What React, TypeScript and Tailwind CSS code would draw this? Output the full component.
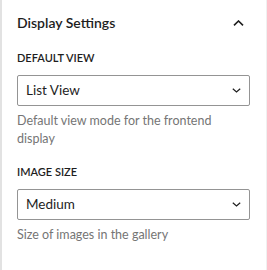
import React from "react";

function ChevronUp() {
  return (
    <svg width="11" height="6" viewBox="0 0 11 6" fill="none">
      <path d="M1 5.3L5.5 1L10 5.3" stroke="#1e1e1e" strokeWidth="1.6" />
    </svg>
  );
}

function ChevronDown() {
  return (
    <svg width="9" height="5" viewBox="0 0 9 5" fill="none">
      <path d="M0.8 0.8L4.5 4L8.2 0.8" stroke="#1e1e1e" strokeWidth="1.2" />
    </svg>
  );
}

function Field({ label, value, help }: { label: string; value: string; help: string }) {
  return (
    <div className="flex flex-col">
      <div className="text-[11px] font-semibold uppercase leading-[16px] text-[#1e1e1e]">{label}</div>
      <div className="mt-[9px] flex h-[31px] items-center justify-between rounded-[2px] border border-[#949494] pl-[8px] pr-[8px]">
        <span className="text-[13.5px] text-[#1e1e1e]">{value}</span>
        <ChevronDown />
      </div>
      <div className="mt-[6px] text-[12.5px] leading-[18px] text-[#757575]">{help}</div>
    </div>
  );
}

export default function App() {
  return (
    <div
      className="h-[270px] w-[267px] border-l-2 border-r border-l-[#e2e2e2] border-r-[#f0f0f0] bg-white"
      style={{ fontFamily: "Lato, 'Noto Sans', sans-serif" }}
    >
      <div className="flex h-[44px] items-center justify-between pl-[15px] pr-[22px] pt-[1px]">
        <span className="text-[14px] font-semibold text-[#1e1e1e]">Display Settings</span>
        <ChevronUp />
      </div>
      <div className="flex flex-col gap-[16px] pl-[15px] pr-[16px] pt-[6px]">
        <Field label="Default view" value="List View" help="Default view mode for the frontend display" />
        <Field label="Image size" value="Medium" help="Size of images in the gallery" />
      </div>
    </div>
  );
}
